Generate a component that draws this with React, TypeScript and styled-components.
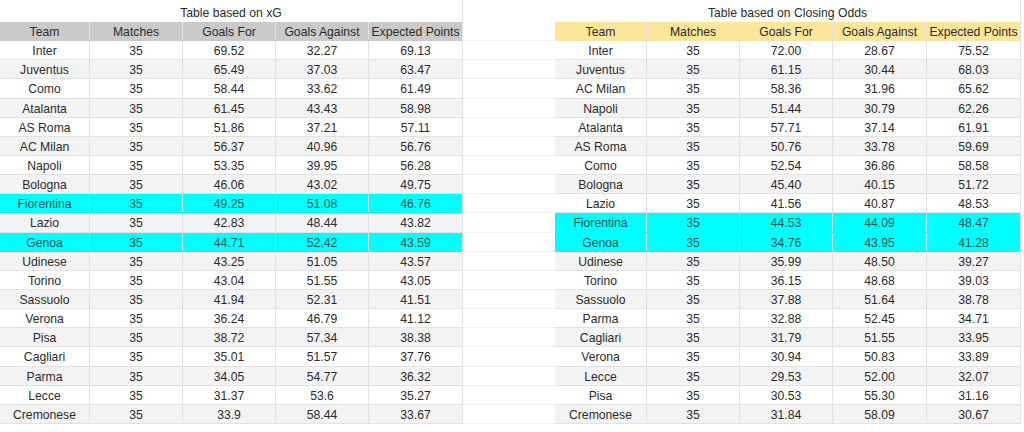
import React from 'react';
import styled, { createGlobalStyle, css } from 'styled-components';

type Row = [string, number, string, string, string];

const xgRows: Row[] = [
  ['Inter', 35, '69.52', '32.27', '69.13'],
  ['Juventus', 35, '65.49', '37.03', '63.47'],
  ['Como', 35, '58.44', '33.62', '61.49'],
  ['Atalanta', 35, '61.45', '43.43', '58.98'],
  ['AS Roma', 35, '51.86', '37.21', '57.11'],
  ['AC Milan', 35, '56.37', '40.96', '56.76'],
  ['Napoli', 35, '53.35', '39.95', '56.28'],
  ['Bologna', 35, '46.06', '43.02', '49.75'],
  ['Fiorentina', 35, '49.25', '51.08', '46.76'],
  ['Lazio', 35, '42.83', '48.44', '43.82'],
  ['Genoa', 35, '44.71', '52.42', '43.59'],
  ['Udinese', 35, '43.25', '51.05', '43.57'],
  ['Torino', 35, '43.04', '51.55', '43.05'],
  ['Sassuolo', 35, '41.94', '52.31', '41.51'],
  ['Verona', 35, '36.24', '46.79', '41.12'],
  ['Pisa', 35, '38.72', '57.34', '38.38'],
  ['Cagliari', 35, '35.01', '51.57', '37.76'],
  ['Parma', 35, '34.05', '54.77', '36.32'],
  ['Lecce', 35, '31.37', '53.6', '35.27'],
  ['Cremonese', 35, '33.9', '58.44', '33.67'],
];

const oddsRows: Row[] = [
  ['Inter', 35, '72.00', '28.67', '75.52'],
  ['Juventus', 35, '61.15', '30.44', '68.03'],
  ['AC Milan', 35, '58.36', '31.96', '65.62'],
  ['Napoli', 35, '51.44', '30.79', '62.26'],
  ['Atalanta', 35, '57.71', '37.14', '61.91'],
  ['AS Roma', 35, '50.76', '33.78', '59.69'],
  ['Como', 35, '52.54', '36.86', '58.58'],
  ['Bologna', 35, '45.40', '40.15', '51.72'],
  ['Lazio', 35, '41.56', '40.87', '48.53'],
  ['Fiorentina', 35, '44.53', '44.09', '48.47'],
  ['Genoa', 35, '34.76', '43.95', '41.28'],
  ['Udinese', 35, '35.99', '48.50', '39.27'],
  ['Torino', 35, '36.15', '48.68', '39.03'],
  ['Sassuolo', 35, '37.88', '51.64', '38.78'],
  ['Parma', 35, '32.88', '52.45', '34.71'],
  ['Cagliari', 35, '31.79', '51.55', '33.95'],
  ['Verona', 35, '30.94', '50.83', '33.89'],
  ['Lecce', 35, '29.53', '52.00', '32.07'],
  ['Pisa', 35, '30.53', '55.30', '31.16'],
  ['Cremonese', 35, '31.84', '58.09', '30.67'],
];

const HEADERS = ['Team', 'Matches', 'Goals For', 'Goals Against', 'Expected Points'];
const HIGHLIGHT = ['Fiorentina', 'Genoa'];

const PITCH = 19.14;
const GRID = '#e2e2e2';

// integer row heights that add up to the sheet's fractional row pitch
const rowHeight = (i: number) => Math.round((i + 1) * PITCH) - Math.round(i * PITCH);

const GlobalStyle = createGlobalStyle`
  html, body {
    margin: 0;
    background: #ffffff;
  }
  body {
    font-family: "Liberation Sans", Arial, sans-serif;
    font-size: 12.2px;
    color: #2b2b2b;
  }
`;

type TableProps = {
  title: string;
  headerColor: string;
  columns: string;
  rows: Row[];
};

function SheetTable({ title, headerColor, columns, rows }: TableProps) {
  return (
    <Block>
      <Title>{title}</Title>
      <Line columns={columns} fill={headerColor} h={rowHeight(0)} header>
        {HEADERS.map((h) => (
          <Cell key={h}>{h}</Cell>
        ))}
      </Line>
      {rows.map((r, i) => {
        const hl = HIGHLIGHT.includes(r[0]);
        return (
          <Line
            key={r[0]}
            columns={columns}
            h={rowHeight(i + 1)}
            fill={hl ? '#00ffff' : i % 2 === 1 ? '#f3f3f3' : '#ffffff'}
            highlight={hl}
          >
            {r.map((v, j) => (
              <Cell key={j}>{v}</Cell>
            ))}
          </Line>
        );
      })}
    </Block>
  );
}

export default function App() {
  return (
    <>
      <GlobalStyle />
      <Sheet>
        <SheetTable
          title="Table based on xG"
          headerColor="#cacaca"
          columns="90px 93px 93px 93px 93px"
          rows={xgRows}
        />
        <Spacer>
          {Array.from({ length: 21 }).map((_, i) => (
            <SpacerCell key={i} h={rowHeight(i)} />
          ))}
        </Spacer>
        <SheetTable
          title="Table based on Closing Odds"
          headerColor="#fde59c"
          columns="92px 93px 93px 94px 93px"
          rows={oddsRows}
        />
      </Sheet>
    </>
  );
}

const Sheet = styled.div`
  display: flex;
  align-items: flex-start;
  width: 1024px;
  height: 432px;
  overflow: hidden;
`;

const Block = styled.div`
  display: flex;
  flex-direction: column;
  flex-shrink: 0;
  border-right: 1px solid ${GRID};
`;

const Title = styled.div`
  height: 22px;
  padding-top: 4px;
  line-height: 18px;
  box-sizing: border-box;
  text-align: center;
  white-space: nowrap;
`;

const Line = styled.div<{
  columns: string;
  fill: string;
  h: number;
  header?: boolean;
  highlight?: boolean;
}>`
  display: grid;
  grid-template-columns: ${({ columns }) => columns};
  height: ${({ h }) => h}px;
  flex-shrink: 0;
  background: ${({ fill }) => fill};
  border-bottom: 1px solid ${GRID};
  box-sizing: border-box;
  ${({ highlight }) =>
    highlight &&
    css`
      color: #24504f;
      border-bottom-color: #00ffff;
    `}
  ${({ header, fill }) =>
    header &&
    css`
      border-bottom-color: ${fill};
    `}
`;

const Cell = styled.div`
  display: flex;
  align-items: center;
  justify-content: center;
  padding: 1px 2px 0;
  white-space: nowrap;
  overflow: hidden;
  border-right: 1px solid ${GRID};
  &:last-child {
    border-right: none;
  }
`;

const Spacer = styled.div`
  display: flex;
  flex-direction: column;
  flex-shrink: 0;
  width: 92px;
  padding-top: 22px;
`;

const SpacerCell = styled.div<{ h: number }>`
  height: ${({ h }) => h}px;
  flex-shrink: 0;
  border-bottom: 1px solid #f2f2f2;
  box-sizing: border-box;
`;
